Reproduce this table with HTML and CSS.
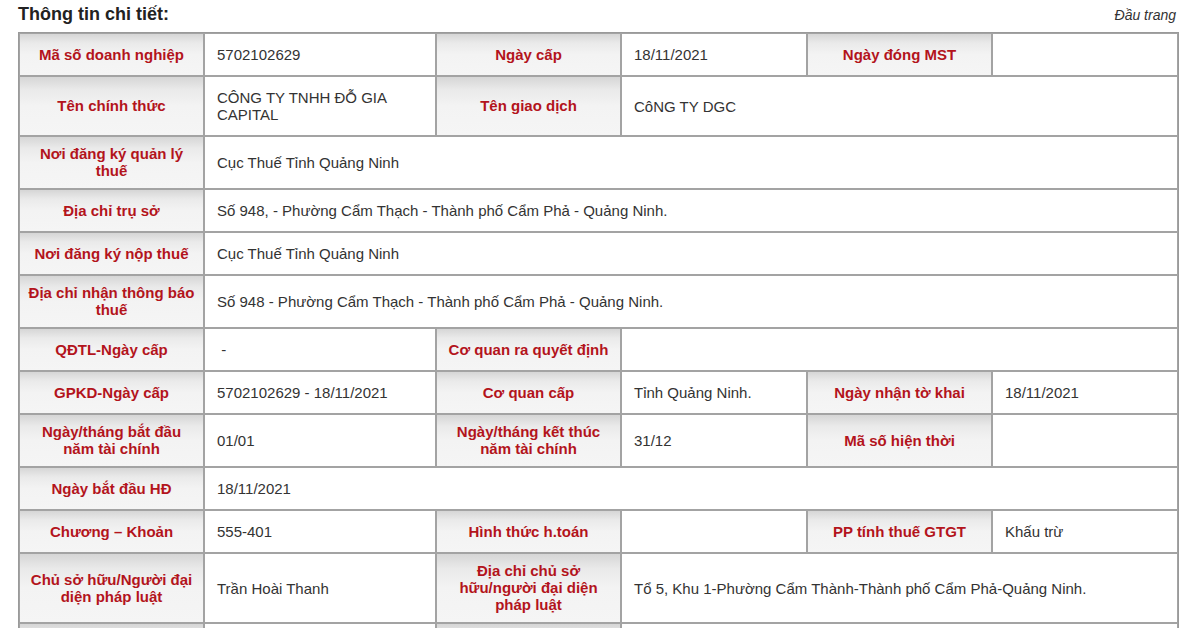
FILE: index.html
```html
<!DOCTYPE html>
<html lang="vi">
<head>
<meta charset="utf-8">
<title>Thông tin chi tiết</title>
<link rel="stylesheet" href="styles.css">
</head>
<body>
<div class="page">
  <div class="head">
    <h2 class="title">Thông tin chi tiết:</h2>
    <a class="top-link">Đầu trang</a>
  </div>
  <table class="info">
    <colgroup>
      <col class="c-lab"><col class="c-val2"><col class="c-lab"><col class="c-val"><col class="c-lab"><col class="c-val">
    </colgroup>
    <tbody>
      <tr>
        <th>Mã số doanh nghiệp</th><td>5702102629</td>
        <th>Ngày cấp</th><td>18/11/2021</td>
        <th>Ngày đóng MST</th><td></td>
      </tr>
      <tr>
        <th>Tên chính thức</th><td>CÔNG TY TNHH ĐỖ GIA CAPITAL</td>
        <th>Tên giao dịch</th><td colspan="3">CôNG TY DGC</td>
      </tr>
      <tr>
        <th>Nơi đăng ký quản lý thuế</th><td colspan="5">Cục Thuế Tỉnh Quảng Ninh</td>
      </tr>
      <tr>
        <th>Địa chỉ trụ sở</th><td colspan="5">Số 948, - Phường Cẩm Thạch - Thành phố Cẩm Phả - Quảng Ninh.</td>
      </tr>
      <tr>
        <th>Nơi đăng ký nộp thuế</th><td colspan="5">Cục Thuế Tỉnh Quảng Ninh</td>
      </tr>
      <tr>
        <th>Địa chỉ nhận thông báo thuế</th><td colspan="5">Số 948 - Phường Cẩm Thạch - Thành phố Cẩm Phả - Quảng Ninh.</td>
      </tr>
      <tr>
        <th>QĐTL-Ngày cấp</th><td>&nbsp;-</td>
        <th>Cơ quan ra quyết định</th><td colspan="3"></td>
      </tr>
      <tr>
        <th>GPKD-Ngày cấp</th><td>5702102629 - 18/11/2021</td>
        <th>Cơ quan cấp</th><td>Tỉnh Quảng Ninh.</td>
        <th>Ngày nhận tờ khai</th><td>18/11/2021</td>
      </tr>
      <tr>
        <th>Ngày/tháng bắt đầu năm tài chính</th><td>01/01</td>
        <th>Ngày/tháng kết thúc năm tài chính</th><td>31/12</td>
        <th>Mã số hiện thời</th><td></td>
      </tr>
      <tr>
        <th>Ngày bắt đầu HĐ</th><td colspan="5">18/11/2021</td>
      </tr>
      <tr>
        <th>Chương – Khoản</th><td>555-401</td>
        <th>Hình thức h.toán</th><td></td>
        <th>PP tính thuế GTGT</th><td>Khấu trừ</td>
      </tr>
      <tr>
        <th>Chủ sở hữu/Người đại diện pháp luật</th><td>Trần Hoài Thanh</td>
        <th>Địa chỉ chủ sở hữu/người đại diện pháp luật</th><td colspan="3">Tổ 5, Khu 1-Phường Cẩm Thành-Thành phố Cẩm Phả-Quảng Ninh.</td>
      </tr>
      <tr class="tail">
        <th></th><td></td>
        <th></th><td colspan="3"></td>
      </tr>
    </tbody>
  </table>
</div>
</body>
</html>
```

FILE: styles.css
```css
html, body {
  margin: 0;
  padding: 0;
  background: #ffffff;
}

body {
  font-family: "Liberation Sans", Arial, sans-serif;
  font-size: 15px;
  color: #333333;
}

.page {
  padding: 0 9px 0 18px;
}

.head {
  display: flex;
  justify-content: space-between;
  align-items: baseline;
  height: 32px;
  box-sizing: border-box;
  padding-top: 3px;
}

.title {
  margin: 0;
  font-size: 18px;
  font-weight: bold;
  color: #222222;
  line-height: 22px;
}

.top-link {
  font-size: 14px;
  font-style: italic;
  color: #333333;
  margin-right: 1px;
}

.info {
  width: 1159px;
  table-layout: fixed;
  border-collapse: separate;
  border-spacing: 0;
  border: 1px solid #9a9a9a;
}

.c-lab { width: 185px; }
.c-val2 { width: 232px; }
.c-val { width: 186px; }

.info th,
.info td {
  border: 1px solid #a3a3a3;
  line-height: 17px;
  vertical-align: middle;
}

.info th {
  padding: 8px 5px 9px;
  font-weight: bold;
  text-align: center;
  color: #b3141c;
  background: linear-gradient(to bottom, #d6d6d6 0%, #eaeaea 22%, #f3f3f3 50%, #f5f5f5 100%);
}

.info td {
  padding: 12px 12px 12px 12px;
  text-align: left;
  color: #333333;
  background: #ffffff;
}

.info .tail th,
.info .tail td {
  height: 24px;
}
```
